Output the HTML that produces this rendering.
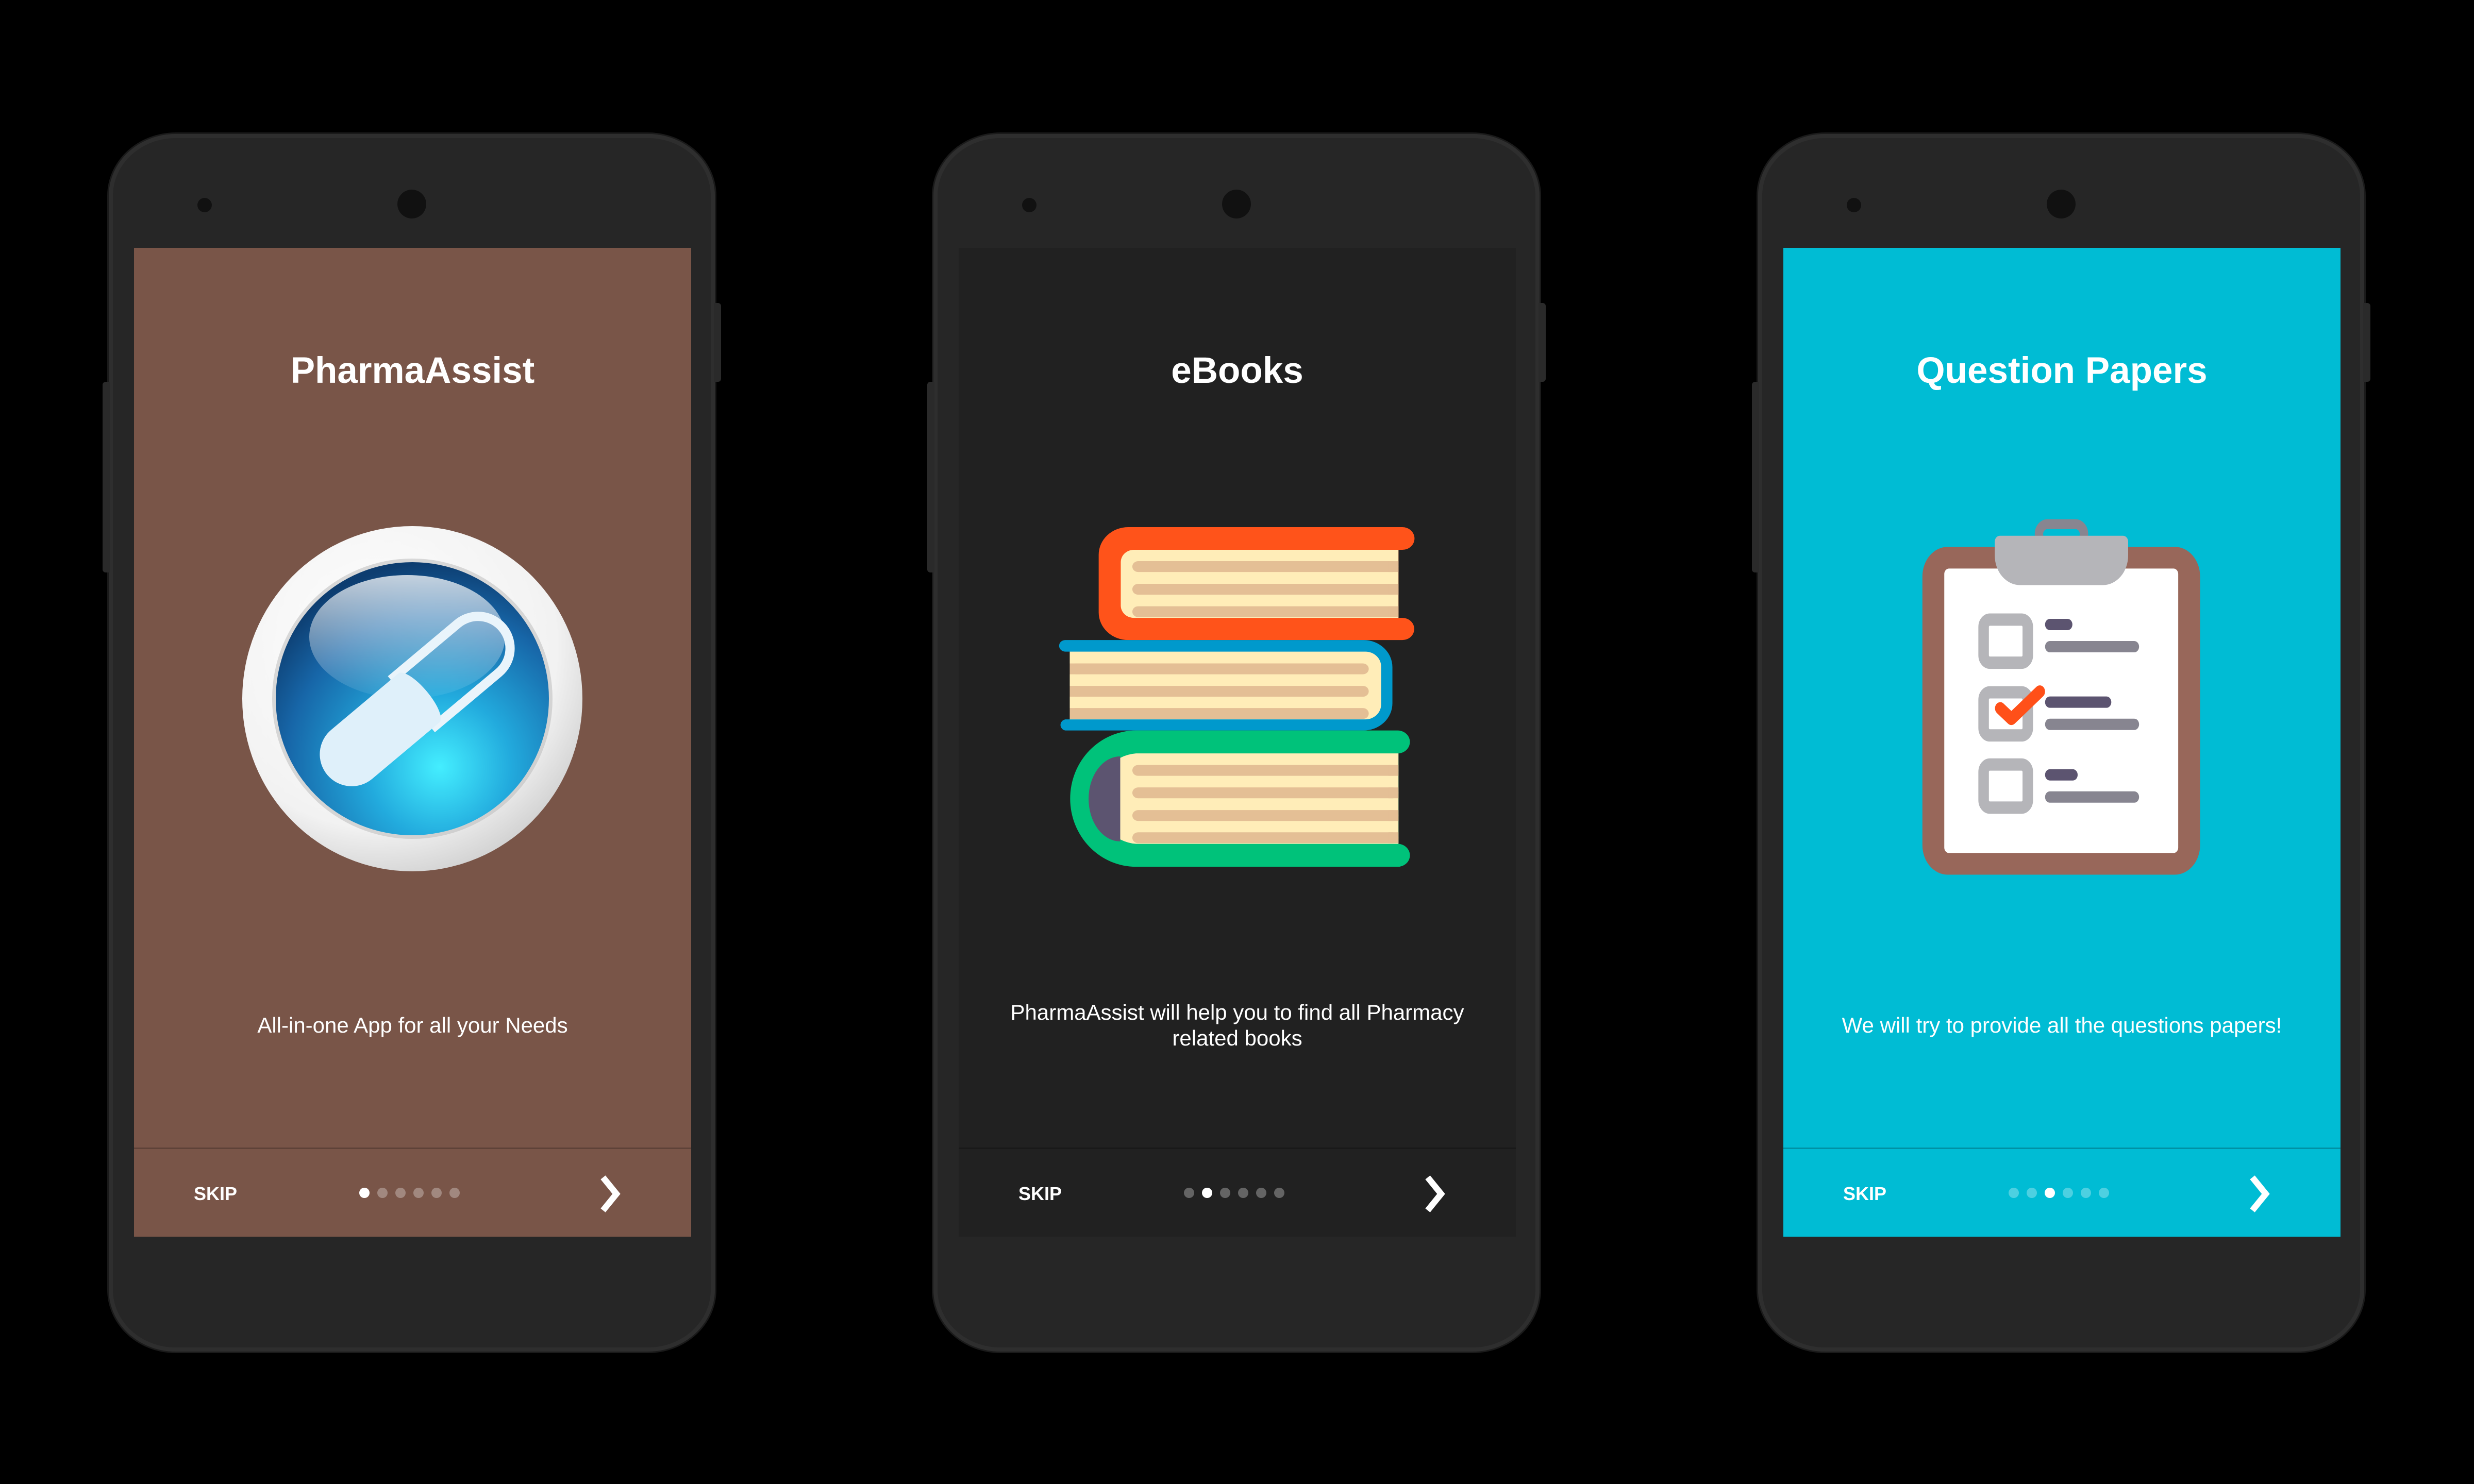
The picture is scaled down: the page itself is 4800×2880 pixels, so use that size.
<!DOCTYPE html>
<html><head><meta charset="utf-8"><style>
html,body{margin:0;padding:0;background:#000;}
body{width:4800px;height:2880px;position:relative;overflow:hidden;font-family:"Liberation Sans",sans-serif;}
.phone{position:absolute;top:260px;width:1176px;height:2363px;background:#262626;border-radius:130px/120px;box-shadow:inset 0 0 0 8px #2e2e2e, 0 0 0 3px #1a1a1a;}
.btnr{position:absolute;left:1174px;top:328px;width:14px;height:153px;background:#2a2a2a;border-radius:0 6px 6px 0;}
.btnl{position:absolute;left:-12px;top:481px;width:14px;height:370px;background:#2a2a2a;border-radius:6px 0 0 6px;}
.cam1{position:absolute;left:172px;top:124px;width:28px;height:28px;border-radius:50%;background:#111;}
.cam2{position:absolute;left:560px;top:108px;width:56px;height:56px;border-radius:50%;background:#111;}
.screen{position:absolute;left:49px;top:221px;width:1081px;height:1919px;overflow:hidden;color:#fff;}
.title{position:absolute;left:0;width:100%;top:194px;text-align:center;font-weight:bold;font-size:71px;line-height:90px;}
.sub{position:absolute;left:0;width:100%;text-align:center;font-size:42px;line-height:50px;}
.sep{position:absolute;left:0;top:1746px;width:100%;height:3px;background:rgba(0,0,0,0.22);}
.skip{position:absolute;left:116px;top:1815px;font-size:36px;font-weight:bold;line-height:42px;}
.dots{position:absolute;left:437px;top:1824px;height:21px;}
.dots i{position:absolute;top:0;width:20px;height:20px;border-radius:50%;background:rgba(255,255,255,0.3);}
.dots i.on{background:#fff;}
.chev{position:absolute;left:896px;top:1796px;}
</style></head><body>

<!-- Phone 1 -->
<div class="phone" style="left:211px">
 <div class="btnr"></div><div class="btnl"></div>
 <div class="cam1"></div><div class="cam2"></div>
 <div class="screen" style="background:#795548">
  <div class="title">PharmaAssist</div>
  <svg style="position:absolute;left:200px;top:530px" width="680" height="690" viewBox="-340 -345 680 690">
   <defs>
    <radialGradient id="ring" cx="0.4" cy="0.35" r="0.7">
     <stop offset="0" stop-color="#ffffff"/><stop offset="0.75" stop-color="#f2f2f2"/><stop offset="1" stop-color="#cfcfcf"/>
    </radialGradient>
    <radialGradient id="ball" cx="0.6" cy="0.75" r="0.75">
     <stop offset="0" stop-color="#44eeff"/><stop offset="0.35" stop-color="#22aadd"/><stop offset="0.75" stop-color="#1766a8"/><stop offset="1" stop-color="#0d3d70"/>
    </radialGradient>
    <linearGradient id="hl" x1="0" y1="0" x2="0" y2="1">
     <stop offset="0" stop-color="#ffffff" stop-opacity="0.75"/><stop offset="1" stop-color="#ffffff" stop-opacity="0.05"/>
    </linearGradient>
   </defs>
   <ellipse cx="0" cy="0" rx="330" ry="335" fill="url(#ring)"/>
   <circle cx="0" cy="0" r="272" fill="#b8b8b8" opacity="0.5"/>
   <circle cx="0" cy="0" r="265" fill="url(#ball)"/>
   <ellipse cx="-10" cy="-120" rx="190" ry="120" fill="url(#hl)"/>
   <g transform="translate(5,5) rotate(-40)">
    <path d="M0,-62 L160,-62 A62,62 0 0 1 160,62 L0,62 Z" fill="none" stroke="#e9f4fb" stroke-width="18"/>
    <path d="M10,-62 L-160,-62 A62,62 0 0 0 -160,62 L10,62 A20,62 0 0 0 10,-62 Z" fill="#dff0fa"/>
   </g>
  </svg>
  <div class="sub" style="top:1484px">All-in-one App for all your Needs</div>
  <div class="sep"></div>
  <div class="skip">SKIP</div>
  <div class="dots"><i class="on" style="left:0"></i><i style="left:35px"></i><i style="left:70px"></i><i style="left:105px"></i><i style="left:140px"></i><i style="left:175px"></i></div>
  <svg class="chev" width="60" height="80" viewBox="0 0 60 80"><path d="M14,8 L40,40 L14,72" fill="none" stroke="#fff" stroke-width="12"/></svg>
 </div>
</div>

<!-- Phone 2 -->
<div class="phone" style="left:1811px">
 <div class="btnr"></div><div class="btnl"></div>
 <div class="cam1"></div><div class="cam2"></div>
 <div class="screen" style="background:#212121">
  <div class="title">eBooks</div>
  <svg style="position:absolute;left:140px;top:499px" width="800" height="750" viewBox="0 0 1568 1568" preserveAspectRatio="none">
   <!-- orange -->
   <path d="M370,90 L1413,90 A45,45 0 0 1 1413,182 L1398,182 L1398,458 L1413,458 A45,45 0 0 1 1413,548 L370,548 A112,112 0 0 1 258,436 L258,202 A112,112 0 0 1 370,90 Z" fill="#FF531A"/>
   <path d="M392,182 L1398,182 L1398,458 L392,458 A50,50 0 0 1 342,408 L342,232 A50,50 0 0 1 392,182 Z" fill="#FFEDB8"/>
   <g fill="#E4BF95">
    <rect x="386" y="228" width="1012" height="44" rx="22"/><rect x="386" y="320" width="1012" height="44" rx="22"/><rect x="386" y="411" width="1012" height="44" rx="22"/>
    <rect x="1360" y="228" width="38" height="44"/><rect x="1360" y="320" width="38" height="44"/><rect x="1360" y="411" width="38" height="44"/>
   </g>
   <!-- blue -->
   <path d="M131,548 L1265,548 A110,110 0 0 1 1375,658 L1375,805 A110,110 0 0 1 1265,915 L131,915 A23,23 0 0 1 131,870 L148,870 L148,595 L131,595 A23,23 0 0 1 131,548 Z" fill="#0099CC"/>
   <path d="M148,595 L1272,595 A60,60 0 0 1 1332,655 L1332,810 A60,60 0 0 1 1272,870 L148,870 Z" fill="#FFEDB8"/>
   <g fill="#E4BF95">
    <rect x="148" y="643" width="1137" height="44" rx="22"/><rect x="148" y="734" width="1137" height="44" rx="22"/><rect x="148" y="824" width="1137" height="44" rx="22"/>
    <rect x="148" y="643" width="40" height="44"/><rect x="148" y="734" width="40" height="44"/><rect x="148" y="824" width="40" height="44"/>
   </g>
   <!-- green -->
   <path d="M400,915 L1395,915 A45,45 0 0 1 1395,1008 L1398,1008 L1398,1375 L1395,1375 A46,46 0 0 1 1395,1468 L400,1468 A250,276 0 0 1 400,915 Z" fill="#00C27A"/>
   <path d="M400,1008 L1398,1008 L1398,1375 L400,1375 A165,184 0 0 1 400,1008 Z" fill="#FFEDB8"/>
   <path d="M340,1020 L340,1365 A120,172 0 0 1 340,1020 Z" fill="#5C5470"/>
   <g fill="#E4BF95">
    <rect x="386" y="1055" width="1012" height="44" rx="22"/><rect x="386" y="1146" width="1012" height="44" rx="22"/><rect x="386" y="1238" width="1012" height="44" rx="22"/><rect x="386" y="1328" width="1012" height="44" rx="22"/>
    <rect x="1360" y="1055" width="38" height="44"/><rect x="1360" y="1146" width="38" height="44"/><rect x="1360" y="1238" width="38" height="44"/><rect x="1360" y="1328" width="38" height="44"/>
   </g>
  </svg>
  <div class="sub" style="top:1459px">PharmaAssist will help you to find all Pharmacy<br>related books</div>
  <div class="sep"></div>
  <div class="skip">SKIP</div>
  <div class="dots"><i style="left:0"></i><i class="on" style="left:35px"></i><i style="left:70px"></i><i style="left:105px"></i><i style="left:140px"></i><i style="left:175px"></i></div>
  <svg class="chev" width="60" height="80" viewBox="0 0 60 80"><path d="M14,8 L40,40 L14,72" fill="none" stroke="#fff" stroke-width="12"/></svg>
 </div>
</div>

<!-- Phone 3 -->
<div class="phone" style="left:3411px">
 <div class="btnr"></div><div class="btnl"></div>
 <div class="cam1"></div><div class="cam2"></div>
 <div class="screen" style="background:#00BCD4">
  <div class="title">Question Papers</div>
  <svg style="position:absolute;left:220px;top:499px" width="640" height="750" viewBox="0 0 1568 1568" preserveAspectRatio="none">
   <rect x="122" y="170" width="1320" height="1330" rx="120" fill="#98675A"/>
   <rect x="226" y="258" width="1112" height="1154" rx="22" fill="#ffffff"/>
   <rect x="676" y="78" width="214" height="80" rx="40" fill="none" stroke="#888590" stroke-width="40"/>
   <path d="M490,125 L1076,125 A24,24 0 0 1 1100,149 L1100,205 A120,120 0 0 1 980,325 L586,325 A120,120 0 0 1 466,205 L466,149 A24,24 0 0 1 490,125 Z" fill="#B5B5B9"/>
   <g fill="none" stroke="#B5B5B9" stroke-width="50">
    <rect x="413" y="465" width="210" height="175" rx="30"/>
    <rect x="413" y="760" width="210" height="175" rx="30"/>
    <rect x="413" y="1053" width="210" height="175" rx="30"/>
   </g>
   <g stroke-linecap="round" stroke-width="46">
    <line x1="728" y1="485" x2="812" y2="485" stroke="#5C5470"/>
    <line x1="728" y1="575" x2="1129" y2="575" stroke="#878590"/>
    <line x1="728" y1="800" x2="997" y2="800" stroke="#5C5470"/>
    <line x1="728" y1="890" x2="1129" y2="890" stroke="#878590"/>
    <line x1="728" y1="1095" x2="837" y2="1095" stroke="#5C5470"/>
    <line x1="728" y1="1185" x2="1129" y2="1185" stroke="#878590"/>
   </g>
   <polyline points="492,825 545,868 680,757" fill="none" stroke="#FF5019" stroke-width="50" stroke-linecap="round" stroke-linejoin="round"/>
  </svg>
  <div class="sub" style="top:1484px">We will try to provide all the questions papers!</div>
  <div class="sep"></div>
  <div class="skip">SKIP</div>
  <div class="dots"><i style="left:0"></i><i style="left:35px"></i><i class="on" style="left:70px"></i><i style="left:105px"></i><i style="left:140px"></i><i style="left:175px"></i></div>
  <svg class="chev" width="60" height="80" viewBox="0 0 60 80"><path d="M14,8 L40,40 L14,72" fill="none" stroke="#fff" stroke-width="12"/></svg>
 </div>
</div>

</body></html>
